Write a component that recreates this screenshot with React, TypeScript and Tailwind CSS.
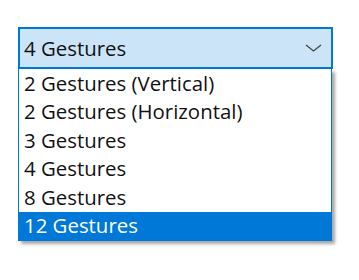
import React from "react";

const items = [
  "2 Gestures (Vertical)",
  "2 Gestures (Horizontal)",
  "3 Gestures",
  "4 Gestures",
  "8 Gestures",
  "12 Gestures",
];

export default function App() {
  return (
    <div className="w-[359px] h-[280px] bg-white pl-[18px] pt-[27px]" style={{ fontFamily: '"Open Sans", "Noto Sans", sans-serif' }}>
      <div className="w-[315px] h-[42px] bg-[#cce4f7] border-2 border-[#0078d7] flex items-center pl-[4px] pr-[9px] text-[20.4px] text-[#111]">
        <span className="flex-1">4 Gestures</span>
        <svg width="17" height="8" viewBox="0 0 17 8" fill="none">
          <path d="M1 1 L8.5 7 L16 1" stroke="#444" strokeWidth="1.3" />
        </svg>
      </div>
      <div className="w-[314px] border border-t-0 border-[#0078d7] bg-white shadow-[3px_3px_3px_rgba(0,0,0,0.35)] text-[20.4px] text-[#111]">
        {items.map((it, i) => (
          <div
            key={it}
            className={`h-[28.5px] flex items-center pl-[5px] ${i === items.length - 1 ? "bg-[#0078d7] text-white" : ""}`}
          >
            {it}
          </div>
        ))}
      </div>
    </div>
  );
}
